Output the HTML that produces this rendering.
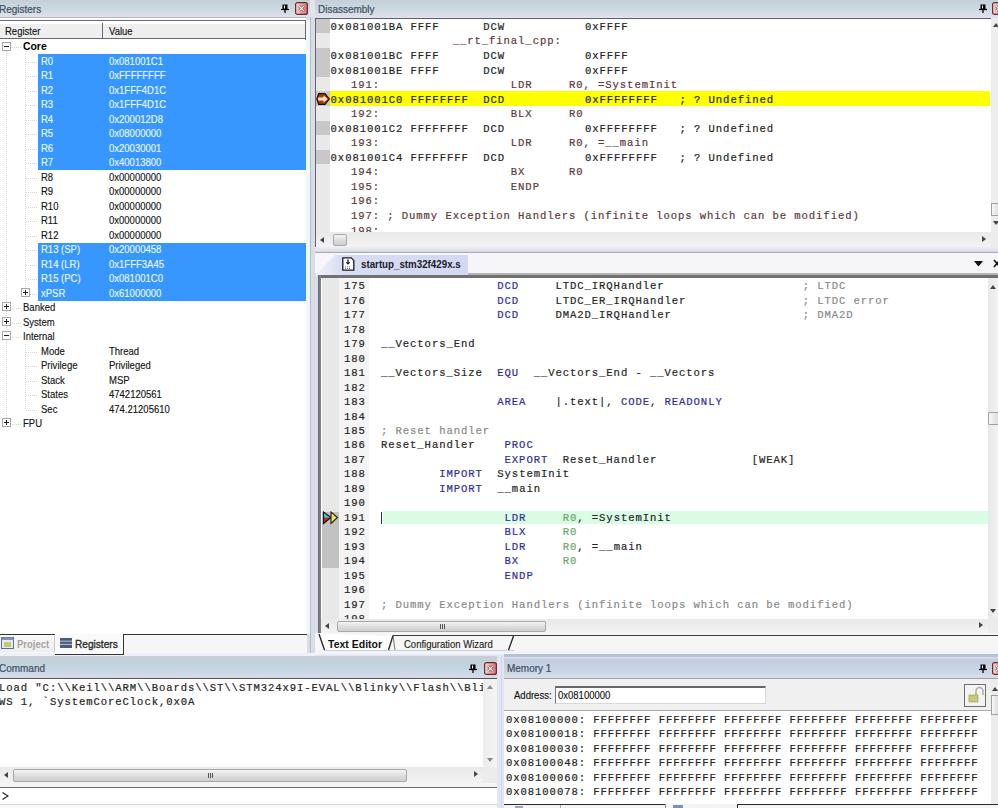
<!DOCTYPE html><html><head><meta charset="utf-8"><style>
*{margin:0;padding:0;box-sizing:border-box}
html,body{width:998px;height:808px;overflow:hidden;background:#e1e4ef;position:relative;font-family:"Liberation Sans",sans-serif}
.a{position:absolute}
.ui{font-family:"Liberation Sans",sans-serif;font-size:10.8px;white-space:pre;line-height:1;transform-origin:0 0}
.sx{transform:scaleX(0.85);font-size:11.2px;-webkit-text-stroke-width:0.15px}
.mono{font-family:"Liberation Mono",monospace;font-size:10.6px;letter-spacing:0.9117px;-webkit-text-stroke-width:0.2px;white-space:pre;line-height:14.545px}
.ttext{color:#3e4d62;font-size:10.5px;-webkit-text-stroke-width:0.2px}
.k{color:#30309a}.c{color:#8a8a8a}.g{color:#6aa86a}.d{color:#5e3a3c}.t{color:#262626}
</style></head><body>
<div class="a" style="left:0px;top:0px;width:310px;height:17px;background:linear-gradient(#c5cfd8 0%,#cdd9e0 55%,#dcdfea 92%,#dfe0ec 100%)"></div>
<div class="a ui ttext" style="left:-1px;top:4px;transform:scaleX(0.95)">Registers</div>
<svg class="a" style="left:281px;top:4px" width="8" height="9" viewBox="0 0 8 9"><path d="M1.5 0.5h5v5h-5z" fill="#000"/><path d="M3.5 1.5v3" stroke="#fff" stroke-width="1"/><path d="M0 5.5h8" stroke="#000" stroke-width="1.2"/><path d="M4 6v3" stroke="#000" stroke-width="1.3"/></svg>
<svg class="a" style="left:295px;top:2px" width="13" height="13" viewBox="0 0 13 13"><defs><linearGradient id="cg1" x1="0" y1="0" x2="1" y2="0"><stop offset="0" stop-color="#f0dcd6"/><stop offset="1" stop-color="#d46c74"/></linearGradient></defs><rect x="0.6" y="0.6" width="11.8" height="11.8" rx="2" fill="url(#cg1)" stroke="#6e2a2a" stroke-width="1.2"/><path d="M4.2 4.2l4.6 4.6M8.8 4.2l-4.6 4.6" stroke="#9a4040" stroke-width="2.6"/><path d="M4.2 4.2l4.6 4.6M8.8 4.2l-4.6 4.6" stroke="#fff" stroke-width="1.2"/></svg>
<div class="a" style="left:0px;top:17px;width:310px;height:1.2px;background:#b8b8c8"></div>
<div class="a" style="left:0px;top:18.2px;width:310px;height:1.8px;background:#fbfbfd"></div>
<div class="a" style="left:306px;top:17px;width:12px;height:640px;background:#d8dce8"></div>
<div class="a" style="left:306px;top:20px;width:4px;height:614px;background:#f0f7f7"></div>
<div class="a" style="left:310px;top:17px;width:1px;height:640px;background:#b8bcc4"></div>
<div class="a" style="left:311px;top:17px;width:4px;height:640px;background:#d9dde7"></div>
<div class="a" style="left:0px;top:20px;width:306px;height:614px;background:#fff;border-top:1.5px solid #6a6a78"></div>
<div class="a" style="left:0px;top:22.5px;width:306px;height:16.5px;background:#efefef;border-top:1px solid #fff;border-bottom:1px solid #6a6a6a"></div>
<div class="a" style="left:102px;top:22.5px;width:1px;height:16.5px;background:#6a6a6a"></div>
<div class="a" style="left:305px;top:20px;width:1.2px;height:19.5px;background:#6a6a6a"></div>
<div class="a ui sx" style="left:5px;top:26px;color:#111">Register</div>
<div class="a ui sx" style="left:109px;top:26px;color:#111">Value</div>
<div class="a" style="left:6px;top:51.245px;width:1px;height:372.74px;background:repeating-linear-gradient(#d4d4d4 0 1px,transparent 1px 2px)"></div>
<div class="a" style="left:25px;top:54.49px;width:1px;height:239.085px;background:repeating-linear-gradient(#d4d4d4 0 1px,transparent 1px 2px)"></div>
<div class="a" style="left:25px;top:344.29px;width:1px;height:65.205px;background:repeating-linear-gradient(#d4d4d4 0 1px,transparent 1px 2px)"></div>
<div class="a" style="left:38px;top:54.14px;width:268px;height:14.54px;background:#3797fe"></div>
<div class="a" style="left:38px;top:68.63px;width:268px;height:14.54px;background:#3797fe"></div>
<div class="a" style="left:38px;top:83.12px;width:268px;height:14.54px;background:#3797fe"></div>
<div class="a" style="left:38px;top:97.61px;width:268px;height:14.54px;background:#3797fe"></div>
<div class="a" style="left:38px;top:112.1px;width:268px;height:14.54px;background:#3797fe"></div>
<div class="a" style="left:38px;top:126.59px;width:268px;height:14.54px;background:#3797fe"></div>
<div class="a" style="left:38px;top:141.08px;width:268px;height:14.54px;background:#3797fe"></div>
<div class="a" style="left:38px;top:155.57px;width:268px;height:14.54px;background:#3797fe"></div>
<div class="a" style="left:38px;top:242.51px;width:268px;height:14.54px;background:#3797fe"></div>
<div class="a" style="left:38px;top:257.0px;width:268px;height:14.54px;background:#3797fe"></div>
<div class="a" style="left:38px;top:271.49px;width:268px;height:14.54px;background:#3797fe"></div>
<div class="a" style="left:38px;top:285.98px;width:268px;height:14.54px;background:#3797fe"></div>
<div class="a" style="left:12px;top:47.24px;width:9px;height:1px;background:repeating-linear-gradient(90deg,#d4d4d4 0 1px,transparent 1px 2px)"></div>
<svg class="a" style="left:2px;top:42px" width="9" height="9" viewBox="0 0 9 9"><rect x="0.5" y="0.5" width="8" height="8" fill="#fff" stroke="#a8a8a8"/><path d="M2 4.5h5" stroke="#222"/></svg>
<div class="a ui" style="left:22.5px;top:41.4px;color:#000;font-weight:bold;font-size:11.2px;transform:scaleX(0.93)">Core</div>
<div class="a" style="left:26px;top:61.73px;width:12px;height:1px;background:repeating-linear-gradient(90deg,#d4d4d4 0 1px,transparent 1px 2px)"></div>
<div class="a ui sx" style="left:41px;top:55.99px;color:#e8f8ff">R0</div>
<div class="a ui sx" style="left:109px;top:55.99px;color:#e8f8ff">0x081001C1</div>
<div class="a" style="left:26px;top:76.23px;width:12px;height:1px;background:repeating-linear-gradient(90deg,#d4d4d4 0 1px,transparent 1px 2px)"></div>
<div class="a ui sx" style="left:41px;top:70.48px;color:#e8f8ff">R1</div>
<div class="a ui sx" style="left:109px;top:70.48px;color:#e8f8ff">0xFFFFFFFF</div>
<div class="a" style="left:26px;top:90.72px;width:12px;height:1px;background:repeating-linear-gradient(90deg,#d4d4d4 0 1px,transparent 1px 2px)"></div>
<div class="a ui sx" style="left:41px;top:84.97px;color:#e8f8ff">R2</div>
<div class="a ui sx" style="left:109px;top:84.97px;color:#e8f8ff">0x1FFF4D1C</div>
<div class="a" style="left:26px;top:105.21px;width:12px;height:1px;background:repeating-linear-gradient(90deg,#d4d4d4 0 1px,transparent 1px 2px)"></div>
<div class="a ui sx" style="left:41px;top:99.46px;color:#e8f8ff">R3</div>
<div class="a ui sx" style="left:109px;top:99.46px;color:#e8f8ff">0x1FFF4D1C</div>
<div class="a" style="left:26px;top:119.7px;width:12px;height:1px;background:repeating-linear-gradient(90deg,#d4d4d4 0 1px,transparent 1px 2px)"></div>
<div class="a ui sx" style="left:41px;top:113.95px;color:#e8f8ff">R4</div>
<div class="a ui sx" style="left:109px;top:113.95px;color:#e8f8ff">0x200012D8</div>
<div class="a" style="left:26px;top:134.19px;width:12px;height:1px;background:repeating-linear-gradient(90deg,#d4d4d4 0 1px,transparent 1px 2px)"></div>
<div class="a ui sx" style="left:41px;top:128.44px;color:#e8f8ff">R5</div>
<div class="a ui sx" style="left:109px;top:128.44px;color:#e8f8ff">0x08000000</div>
<div class="a" style="left:26px;top:148.68px;width:12px;height:1px;background:repeating-linear-gradient(90deg,#d4d4d4 0 1px,transparent 1px 2px)"></div>
<div class="a ui sx" style="left:41px;top:142.93px;color:#e8f8ff">R6</div>
<div class="a ui sx" style="left:109px;top:142.93px;color:#e8f8ff">0x20030001</div>
<div class="a" style="left:26px;top:163.17px;width:12px;height:1px;background:repeating-linear-gradient(90deg,#d4d4d4 0 1px,transparent 1px 2px)"></div>
<div class="a ui sx" style="left:41px;top:157.42px;color:#e8f8ff">R7</div>
<div class="a ui sx" style="left:109px;top:157.42px;color:#e8f8ff">0x40013800</div>
<div class="a" style="left:26px;top:177.66px;width:12px;height:1px;background:repeating-linear-gradient(90deg,#d4d4d4 0 1px,transparent 1px 2px)"></div>
<div class="a ui sx" style="left:41px;top:171.91px;color:#141414">R8</div>
<div class="a ui sx" style="left:109px;top:171.91px;color:#141414">0x00000000</div>
<div class="a" style="left:26px;top:192.15px;width:12px;height:1px;background:repeating-linear-gradient(90deg,#d4d4d4 0 1px,transparent 1px 2px)"></div>
<div class="a ui sx" style="left:41px;top:186.4px;color:#141414">R9</div>
<div class="a ui sx" style="left:109px;top:186.4px;color:#141414">0x00000000</div>
<div class="a" style="left:26px;top:206.64px;width:12px;height:1px;background:repeating-linear-gradient(90deg,#d4d4d4 0 1px,transparent 1px 2px)"></div>
<div class="a ui sx" style="left:41px;top:200.89px;color:#141414">R10</div>
<div class="a ui sx" style="left:109px;top:200.89px;color:#141414">0x00000000</div>
<div class="a" style="left:26px;top:221.12px;width:12px;height:1px;background:repeating-linear-gradient(90deg,#d4d4d4 0 1px,transparent 1px 2px)"></div>
<div class="a ui sx" style="left:41px;top:215.38px;color:#141414">R11</div>
<div class="a ui sx" style="left:109px;top:215.38px;color:#141414">0x00000000</div>
<div class="a" style="left:26px;top:235.62px;width:12px;height:1px;background:repeating-linear-gradient(90deg,#d4d4d4 0 1px,transparent 1px 2px)"></div>
<div class="a ui sx" style="left:41px;top:229.87px;color:#141414">R12</div>
<div class="a ui sx" style="left:109px;top:229.87px;color:#141414">0x00000000</div>
<div class="a" style="left:26px;top:250.11px;width:12px;height:1px;background:repeating-linear-gradient(90deg,#d4d4d4 0 1px,transparent 1px 2px)"></div>
<div class="a ui sx" style="left:41px;top:244.36px;color:#e8f8ff">R13 (SP)</div>
<div class="a ui sx" style="left:109px;top:244.36px;color:#e8f8ff">0x20000458</div>
<div class="a" style="left:26px;top:264.6px;width:12px;height:1px;background:repeating-linear-gradient(90deg,#d4d4d4 0 1px,transparent 1px 2px)"></div>
<div class="a ui sx" style="left:41px;top:258.85px;color:#e8f8ff">R14 (LR)</div>
<div class="a ui sx" style="left:109px;top:258.85px;color:#e8f8ff">0x1FFF3A45</div>
<div class="a" style="left:26px;top:279.09px;width:12px;height:1px;background:repeating-linear-gradient(90deg,#d4d4d4 0 1px,transparent 1px 2px)"></div>
<div class="a ui sx" style="left:41px;top:273.34px;color:#e8f8ff">R15 (PC)</div>
<div class="a ui sx" style="left:109px;top:273.34px;color:#e8f8ff">0x081001C0</div>
<div class="a" style="left:30px;top:293.58px;width:8px;height:1px;background:repeating-linear-gradient(90deg,#d4d4d4 0 1px,transparent 1px 2px)"></div>
<svg class="a" style="left:21px;top:288px" width="9" height="9" viewBox="0 0 9 9"><rect x="0.5" y="0.5" width="8" height="8" fill="#fff" stroke="#a8a8a8"/><path d="M2 4.5h5" stroke="#222"/><path d="M4.5 2v5" stroke="#222"/></svg>
<div class="a ui sx" style="left:41px;top:287.83px;color:#e8f8ff">xPSR</div>
<div class="a ui sx" style="left:109px;top:287.83px;color:#e8f8ff">0x61000000</div>
<div class="a" style="left:12px;top:308.06px;width:9px;height:1px;background:repeating-linear-gradient(90deg,#d4d4d4 0 1px,transparent 1px 2px)"></div>
<svg class="a" style="left:2px;top:302px" width="9" height="9" viewBox="0 0 9 9"><rect x="0.5" y="0.5" width="8" height="8" fill="#fff" stroke="#a8a8a8"/><path d="M2 4.5h5" stroke="#222"/><path d="M4.5 2v5" stroke="#222"/></svg>
<div class="a ui sx" style="left:22.5px;top:302.32px;color:#141414">Banked</div>
<div class="a" style="left:12px;top:322.56px;width:9px;height:1px;background:repeating-linear-gradient(90deg,#d4d4d4 0 1px,transparent 1px 2px)"></div>
<svg class="a" style="left:2px;top:317px" width="9" height="9" viewBox="0 0 9 9"><rect x="0.5" y="0.5" width="8" height="8" fill="#fff" stroke="#a8a8a8"/><path d="M2 4.5h5" stroke="#222"/><path d="M4.5 2v5" stroke="#222"/></svg>
<div class="a ui sx" style="left:22.5px;top:316.81px;color:#141414">System</div>
<div class="a" style="left:12px;top:337.05px;width:9px;height:1px;background:repeating-linear-gradient(90deg,#d4d4d4 0 1px,transparent 1px 2px)"></div>
<svg class="a" style="left:2px;top:331px" width="9" height="9" viewBox="0 0 9 9"><rect x="0.5" y="0.5" width="8" height="8" fill="#fff" stroke="#a8a8a8"/><path d="M2 4.5h5" stroke="#222"/></svg>
<div class="a ui sx" style="left:22.5px;top:331.3px;color:#141414">Internal</div>
<div class="a" style="left:26px;top:351.54px;width:12px;height:1px;background:repeating-linear-gradient(90deg,#d4d4d4 0 1px,transparent 1px 2px)"></div>
<div class="a ui sx" style="left:41px;top:345.79px;color:#141414">Mode</div>
<div class="a ui sx" style="left:109px;top:345.79px;color:#141414">Thread</div>
<div class="a" style="left:26px;top:366.03px;width:12px;height:1px;background:repeating-linear-gradient(90deg,#d4d4d4 0 1px,transparent 1px 2px)"></div>
<div class="a ui sx" style="left:41px;top:360.28px;color:#141414">Privilege</div>
<div class="a ui sx" style="left:109px;top:360.28px;color:#141414">Privileged</div>
<div class="a" style="left:26px;top:380.51px;width:12px;height:1px;background:repeating-linear-gradient(90deg,#d4d4d4 0 1px,transparent 1px 2px)"></div>
<div class="a ui sx" style="left:41px;top:374.77px;color:#141414">Stack</div>
<div class="a ui sx" style="left:109px;top:374.77px;color:#141414">MSP</div>
<div class="a" style="left:26px;top:395.0px;width:12px;height:1px;background:repeating-linear-gradient(90deg,#d4d4d4 0 1px,transparent 1px 2px)"></div>
<div class="a ui sx" style="left:41px;top:389.26px;color:#141414">States</div>
<div class="a ui sx" style="left:109px;top:389.26px;color:#141414">4742120561</div>
<div class="a" style="left:26px;top:409.5px;width:12px;height:1px;background:repeating-linear-gradient(90deg,#d4d4d4 0 1px,transparent 1px 2px)"></div>
<div class="a ui sx" style="left:41px;top:403.75px;color:#141414">Sec</div>
<div class="a ui sx" style="left:109px;top:403.75px;color:#141414">474.21205610</div>
<div class="a" style="left:12px;top:423.99px;width:9px;height:1px;background:repeating-linear-gradient(90deg,#d4d4d4 0 1px,transparent 1px 2px)"></div>
<svg class="a" style="left:2px;top:418px" width="9" height="9" viewBox="0 0 9 9"><rect x="0.5" y="0.5" width="8" height="8" fill="#fff" stroke="#a8a8a8"/><path d="M2 4.5h5" stroke="#222"/><path d="M4.5 2v5" stroke="#222"/></svg>
<div class="a ui sx" style="left:22.5px;top:418.24px;color:#141414">FPU</div>
<div class="a" style="left:0px;top:634px;width:307px;height:19px;background:#f6f6f6"></div>
<div class="a" style="left:0px;top:653px;width:315px;height:3px;background:#eef1f8"></div>
<div class="a" style="left:0px;top:635px;width:54px;height:17px;background:linear-gradient(#f8f8f8,#eeeeee)"></div>
<svg class="a" style="left:1px;top:637px" width="13" height="12" viewBox="0 0 13 12"><rect x="0.5" y="0.5" width="12" height="11" fill="#e4eaf4" stroke="#5a6e9a"/><rect x="0.5" y="0.5" width="12" height="2.5" fill="#7f93bd"/><rect x="3" y="5" width="7" height="5" fill="#c8c86a"/></svg>
<div class="a ui" style="left:16.5px;top:639px;color:#a4a4a4;font-weight:bold;font-size:10.5px;transform:scaleX(0.9)">Project</div>
<div class="a" style="left:0px;top:633.5px;width:55px;height:1.2px;background:#333"></div>
<div class="a" style="left:122.5px;top:633.5px;width:184px;height:1.2px;background:#333"></div>
<div class="a" style="left:55px;top:634px;width:68.5px;height:20.5px;background:#fafafa;border-right:1.2px solid #333;border-bottom:1.2px solid #333"></div>
<div class="a" style="left:54px;top:636px;width:1px;height:16px;background:#c8c8c8"></div>
<svg class="a" style="left:60px;top:638px" width="12" height="10" viewBox="0 0 12 10"><rect x="0" y="0" width="12" height="10" fill="#4a5a7a"/><path d="M0 3.2h12M0 6.4h12" stroke="#c8d0e0" stroke-width="0.9"/></svg>
<div class="a ui" style="left:74.5px;top:639px;color:#2a2a2a;font-size:11px;-webkit-text-stroke-width:0.35px;transform:scaleX(0.92)">Registers</div>
<div class="a" style="left:315px;top:0px;width:683px;height:17px;background:linear-gradient(#c5cfd8 0%,#cdd9e0 55%,#dcdfea 92%,#dfe0ec 100%)"></div>
<div class="a ui ttext" style="left:318px;top:4px;transform:scaleX(0.95)">Disassembly</div>
<svg class="a" style="left:979px;top:4px" width="8" height="9" viewBox="0 0 8 9"><path d="M1.5 0.5h5v5h-5z" fill="#000"/><path d="M3.5 1.5v3" stroke="#fff" stroke-width="1"/><path d="M0 5.5h8" stroke="#000" stroke-width="1.2"/><path d="M4 6v3" stroke="#000" stroke-width="1.3"/></svg>
<svg class="a" style="left:992px;top:2px" width="13" height="13" viewBox="0 0 13 13"><defs><linearGradient id="cg2" x1="0" y1="0" x2="1" y2="0"><stop offset="0" stop-color="#f0dcd6"/><stop offset="1" stop-color="#d46c74"/></linearGradient></defs><rect x="0.6" y="0.6" width="11.8" height="11.8" rx="2" fill="url(#cg2)" stroke="#6e2a2a" stroke-width="1.2"/><path d="M4.2 4.2l4.6 4.6M8.8 4.2l-4.6 4.6" stroke="#9a4040" stroke-width="2.6"/><path d="M4.2 4.2l4.6 4.6M8.8 4.2l-4.6 4.6" stroke="#fff" stroke-width="1.2"/></svg>
<div class="a" style="left:315px;top:17.9px;width:683px;height:1.1px;background:#5e5e6e"></div>
<div class="a" style="left:315px;top:19px;width:683px;height:228px;background:#fff;border-left:1.5px solid #606868"></div>
<div class="a" style="left:316px;top:18.7px;width:14px;height:14.54px;background:#c8c8c8"></div>
<div class="a" style="left:316px;top:33.24px;width:14px;height:14.54px;background:#e9e9e9"></div>
<div class="a" style="left:316px;top:47.79px;width:14px;height:14.54px;background:#c8c8c8"></div>
<div class="a" style="left:316px;top:62.33px;width:14px;height:14.54px;background:#c8c8c8"></div>
<div class="a" style="left:316px;top:76.88px;width:14px;height:14.54px;background:#e9e9e9"></div>
<div class="a" style="left:316px;top:91.42px;width:14px;height:14.54px;background:#c8c8c8"></div>
<div class="a" style="left:329.5px;top:90.92px;width:660px;height:15.3px;background:#ffff00"></div>
<div class="a" style="left:316px;top:105.97px;width:14px;height:14.54px;background:#e9e9e9"></div>
<div class="a" style="left:316px;top:120.52px;width:14px;height:14.54px;background:#c8c8c8"></div>
<div class="a" style="left:316px;top:135.06px;width:14px;height:14.54px;background:#e9e9e9"></div>
<div class="a" style="left:316px;top:149.6px;width:14px;height:14.54px;background:#c8c8c8"></div>
<div class="a" style="left:316px;top:164.15px;width:14px;height:14.54px;background:#e9e9e9"></div>
<div class="a" style="left:316px;top:178.69px;width:14px;height:14.54px;background:#e9e9e9"></div>
<div class="a" style="left:316px;top:193.24px;width:14px;height:14.54px;background:#e9e9e9"></div>
<div class="a" style="left:316px;top:207.78px;width:14px;height:14.54px;background:#e9e9e9"></div>
<div class="a" style="left:316px;top:222.33px;width:14px;height:9.67px;background:#e9e9e9"></div>
<div class="a" style="left:316px;top:19.9px;width:675px;height:212px;overflow:hidden">
<div class="a mono t" style="left:14.6px;top:0.0px">0x081001BA FFFF      DCW           0xFFFF</div>
<div class="a mono d" style="left:13.1px;top:14.54px">                 __rt_final_cpp:</div>
<div class="a mono t" style="left:14.6px;top:29.09px">0x081001BC FFFF      DCW           0xFFFF</div>
<div class="a mono t" style="left:14.6px;top:43.63px">0x081001BE FFFF      DCW           0xFFFF</div>
<div class="a mono d" style="left:13.1px;top:58.18px">   191:                  LDR     R0, =SystemInit</div>
<div class="a mono t" style="left:14.6px;top:72.72px">0x081001C0 FFFFFFFF  DCD           0xFFFFFFFF   ; ? Undefined</div>
<div class="a mono d" style="left:13.1px;top:87.27px">   192:                  BLX     R0</div>
<div class="a mono t" style="left:14.6px;top:101.81px">0x081001C2 FFFFFFFF  DCD           0xFFFFFFFF   ; ? Undefined</div>
<div class="a mono d" style="left:13.1px;top:116.36px">   193:                  LDR     R0, =__main</div>
<div class="a mono t" style="left:14.6px;top:130.91px">0x081001C4 FFFFFFFF  DCD           0xFFFFFFFF   ; ? Undefined</div>
<div class="a mono d" style="left:13.1px;top:145.45px">   194:                  BX      R0</div>
<div class="a mono d" style="left:13.1px;top:160.0px">   195:                  ENDP</div>
<div class="a mono d" style="left:13.1px;top:174.54px">   196:</div>
<div class="a mono d" style="left:13.1px;top:189.09px">   197: ; Dummy Exception Handlers (infinite loops which can be modified)</div>
<div class="a mono d" style="left:13.1px;top:203.63px">   198:</div>
</div>
<svg class="a" style="left:316px;top:92px" width="14" height="14" viewBox="0 0 14 14"><path d="M2.6 1.6H9L13.3 7L9 12.4H2.6L0.8 7z" fill="#a8381c" stroke="#1a0806" stroke-width="1.1"/><path d="M2.2 5.6H7.6V3.6L11.6 7L7.6 10.4V8.4H2.2z" fill="#fff2a8"/></svg>
<div class="a" style="left:991px;top:18px;width:7px;height:214px;background:#ededed"></div>
<svg class="a" style="left:993px;top:23px" width="5" height="4"><path d="M0 4h6L3 0z" fill="#444"/></svg>
<div class="a" style="left:991px;top:203px;width:7px;height:13px;background:linear-gradient(90deg,#f6f6f6,#dedede);border:1px solid #a0a0a0;border-right:none"></div>
<svg class="a" style="left:993px;top:221px" width="5" height="4"><path d="M0 0h6L3 4z" fill="#444"/></svg>
<div class="a" style="left:316px;top:232px;width:675px;height:15px;background:linear-gradient(#e9e9e9,#f3f3f3)"></div>
<svg class="a" style="left:320px;top:236.5px" width="5" height="6"><path d="M4 0v6L0 3z" fill="#444"/></svg>
<svg class="a" style="left:982px;top:235.5px" width="5" height="6"><path d="M0 0v6L4 3z" fill="#444"/></svg>
<div class="a" style="left:333px;top:233.5px;width:14px;height:12px;background:linear-gradient(#f4f4f4,#dcdcdc 55%,#cfcfcf);border:1px solid #a9a9a9;border-radius:2px"></div>
<div class="a" style="left:991px;top:232px;width:7px;height:15px;background:#ececec"></div>
<div class="a" style="left:315px;top:247px;width:683px;height:5.3px;background:linear-gradient(#ececf2,#e4e4ee 55%,#d6d6e2)"></div>
<div class="a" style="left:315px;top:252px;width:683px;height:0.8px;background:#a8a8b8"></div>
<div class="a" style="left:315px;top:252.8px;width:683px;height:20.5px;background:#f6f6f8"></div>
<div class="a" style="left:318px;top:273px;width:680px;height:2px;background:#b4b4b4"></div>
<svg class="a" style="left:315px;top:254.5px" width="160" height="21" viewBox="0 0 160 21"><defs><linearGradient id="tg" x1="0" y1="0" x2="1" y2="0"><stop offset="0" stop-color="#f4f4fa"/><stop offset="0.18" stop-color="#d6dcf2"/><stop offset="1" stop-color="#d2d9f0"/></linearGradient></defs><path d="M0 20.5L20 0H153V20.5z" fill="url(#tg)"/></svg>
<svg class="a" style="left:342px;top:256.5px" width="13" height="14" viewBox="0 0 13 14"><path d="M0.8 0.8h8.4l2.6 2.6v9.8h-11z" fill="#fff" stroke="#1a1a1a" stroke-width="1.3"/><path d="M6 2.5v3" stroke="#111" stroke-width="1.3"/><path d="M3.6 5.2h4.8L6 7.8z" fill="#111"/><path d="M3 9.8h6M3 11.6h6" stroke="#555" stroke-width="0.9" stroke-dasharray="1 1"/></svg>
<div class="a ui" style="left:360.5px;top:258.5px;color:#1a1a2a;font-weight:bold;font-size:11px;transform:scaleX(0.886)">startup_stm32f429x.s</div>
<svg class="a" style="left:974px;top:260.5px" width="9" height="5.5"><path d="M0 0h9L4.5 5.5z" fill="#111"/></svg>
<svg class="a" style="left:993px;top:259px" width="8" height="9"><path d="M1 1l6 7M7 1l-6 7" stroke="#111" stroke-width="1.6"/></svg>
<div class="a" style="left:318px;top:275px;width:680px;height:2.5px;background:#707070"></div>
<div class="a" style="left:318px;top:275px;width:2.5px;height:358px;background:linear-gradient(90deg,#6a6a78,#808890)"></div>
<div class="a" style="left:320.5px;top:277.5px;width:668px;height:341.5px;background:#fff"></div>
<div class="a" style="left:320.5px;top:277.5px;width:1.5px;height:341.5px;background:#fff"></div>
<div class="a" style="left:322px;top:277.5px;width:17px;height:341.5px;background:#e8e8e8"></div>
<div class="a" style="left:322px;top:511.5px;width:17px;height:56.8px;background:#c2c2c2"></div>
<div class="a" style="left:339px;top:277.5px;width:30px;height:341.5px;background:#f4f4f4"></div>
<div class="a" style="left:383px;top:511.3px;width:605px;height:12.6px;background:#dafce4"></div>
<div class="a" style="left:381px;top:512.3px;width:1.2px;height:12px;background:#333"></div>
<div class="a" style="left:320.5px;top:279.2px;width:668px;height:339.4px;overflow:hidden">
<div class="a mono t" style="left:23.5px;top:0.0px">175</div>
<div class="a mono t" style="left:60.5px;top:0.0px">                <span class="k">DCD</span><span class="t">     LTDC_IRQHandler                   </span><span class="c">; LTDC</span></div>
<div class="a mono t" style="left:23.5px;top:14.48px">176</div>
<div class="a mono t" style="left:60.5px;top:14.48px">                <span class="k">DCD</span><span class="t">     LTDC_ER_IRQHandler                </span><span class="c">; LTDC error</span></div>
<div class="a mono t" style="left:23.5px;top:28.96px">177</div>
<div class="a mono t" style="left:60.5px;top:28.96px">                <span class="k">DCD</span><span class="t">     DMA2D_IRQHandler                  </span><span class="c">; DMA2D</span></div>
<div class="a mono t" style="left:23.5px;top:43.44px">178</div>
<div class="a mono t" style="left:23.5px;top:57.92px">179</div>
<div class="a mono t" style="left:60.5px;top:57.92px"><span class="t">__Vectors_End</span></div>
<div class="a mono t" style="left:23.5px;top:72.4px">180</div>
<div class="a mono t" style="left:23.5px;top:86.88px">181</div>
<div class="a mono t" style="left:60.5px;top:86.88px"><span class="t">__Vectors_Size  </span><span class="k">EQU</span><span class="t">  __Vectors_End - __Vectors</span></div>
<div class="a mono t" style="left:23.5px;top:101.36px">182</div>
<div class="a mono t" style="left:23.5px;top:115.84px">183</div>
<div class="a mono t" style="left:60.5px;top:115.84px">                <span class="k">AREA</span><span class="t">    |.text|, </span><span class="k">CODE</span><span class="t">, </span><span class="k">READONLY</span></div>
<div class="a mono t" style="left:23.5px;top:130.32px">184</div>
<div class="a mono t" style="left:23.5px;top:144.8px">185</div>
<div class="a mono t" style="left:60.5px;top:144.8px"><span class="c">; Reset handler</span></div>
<div class="a mono t" style="left:23.5px;top:159.28px">186</div>
<div class="a mono t" style="left:60.5px;top:159.28px"><span class="t">Reset_Handler    </span><span class="k">PROC</span></div>
<div class="a mono t" style="left:23.5px;top:173.76px">187</div>
<div class="a mono t" style="left:60.5px;top:173.76px">                 <span class="k">EXPORT</span><span class="t">  Reset_Handler             [WEAK]</span></div>
<div class="a mono t" style="left:23.5px;top:188.24px">188</div>
<div class="a mono t" style="left:60.5px;top:188.24px">        <span class="k">IMPORT</span><span class="t">  SystemInit</span></div>
<div class="a mono t" style="left:23.5px;top:202.72px">189</div>
<div class="a mono t" style="left:60.5px;top:202.72px">        <span class="k">IMPORT</span><span class="t">  __main</span></div>
<div class="a mono t" style="left:23.5px;top:217.2px">190</div>
<div class="a mono t" style="left:23.5px;top:231.68px">191</div>
<div class="a mono t" style="left:60.5px;top:231.68px">                 <span class="k">LDR</span><span class="t">     </span><span class="g">R0</span><span class="t">, =SystemInit</span></div>
<div class="a mono t" style="left:23.5px;top:246.16px">192</div>
<div class="a mono t" style="left:60.5px;top:246.16px">                 <span class="k">BLX</span><span class="t">     </span><span class="g">R0</span></div>
<div class="a mono t" style="left:23.5px;top:260.64px">193</div>
<div class="a mono t" style="left:60.5px;top:260.64px">                 <span class="k">LDR</span><span class="t">     </span><span class="g">R0</span><span class="t">, =__main</span></div>
<div class="a mono t" style="left:23.5px;top:275.12px">194</div>
<div class="a mono t" style="left:60.5px;top:275.12px">                 <span class="k">BX</span><span class="t">      </span><span class="g">R0</span></div>
<div class="a mono t" style="left:23.5px;top:289.6px">195</div>
<div class="a mono t" style="left:60.5px;top:289.6px">                 <span class="k">ENDP</span></div>
<div class="a mono t" style="left:23.5px;top:304.08px">196</div>
<div class="a mono t" style="left:23.5px;top:318.56px">197</div>
<div class="a mono t" style="left:60.5px;top:318.56px"><span class="c">; Dummy Exception Handlers (infinite loops which can be modified)</span></div>
<div class="a mono t" style="left:23.5px;top:333.04px">198</div>
</div>
<svg class="a" style="left:322px;top:510.6px" width="17" height="14" viewBox="0 0 17 14"><path d="M1.5 1L9 6.5H1.5z" fill="#3cc8d8"/><path d="M1.5 6.5H9L1.5 12.5z" fill="#c42a22"/><path d="M1.5 1v11.5L9 6.5z" fill="none" stroke="#141414" stroke-width="1.1"/><path d="M9 1v11.5L15.5 6.5z" fill="#f4e45a" stroke="#1e1e1e" stroke-width="1.1"/></svg>
<div class="a" style="left:988px;top:277.5px;width:10px;height:341.5px;background:linear-gradient(90deg,#e8e8e8,#f2f2f2)"></div>
<svg class="a" style="left:990px;top:285px" width="6" height="4"><path d="M0 4h6L3 0z" fill="#444"/></svg>
<div class="a" style="left:988px;top:412px;width:10px;height:13px;background:linear-gradient(90deg,#f8f8f8,#dcdcdc);border:1px solid #a0a0a0;border-right:none;border-radius:2px 0 0 2px"></div>
<svg class="a" style="left:990px;top:609px" width="6" height="4"><path d="M0 0h6L3 4z" fill="#444"/></svg>
<div class="a" style="left:320.5px;top:619px;width:667.5px;height:14px;background:linear-gradient(#e9e9e9,#f3f3f3)"></div>
<svg class="a" style="left:324.5px;top:623.0px" width="5" height="6"><path d="M4 0v6L0 3z" fill="#444"/></svg>
<svg class="a" style="left:979.0px;top:622.0px" width="5" height="6"><path d="M0 0v6L4 3z" fill="#444"/></svg>
<div class="a" style="left:337px;top:620.5px;width:209px;height:11px;background:linear-gradient(#f4f4f4,#dcdcdc 55%,#cfcfcf);border:1px solid #a9a9a9;border-radius:2px"></div>
<div class="a" style="left:439.5px;top:623.5px;width:1px;height:5px;background:#555"></div>
<div class="a" style="left:441.5px;top:623.5px;width:1px;height:5px;background:#555"></div>
<div class="a" style="left:443.5px;top:623.5px;width:1px;height:5px;background:#555"></div>
<div class="a" style="left:988px;top:619px;width:10px;height:14px;background:#ececec"></div>
<div class="a" style="left:315px;top:633px;width:683px;height:18px;background:#f6f6f6"></div>
<div class="a" style="left:393px;top:635.3px;width:605px;height:1.2px;background:#3a3a3a"></div>
<div class="a" style="left:324px;top:650px;width:190px;height:1px;background:#cfcfcf"></div>
<svg class="a" style="left:315px;top:633px" width="205" height="19" viewBox="0 0 205 19"><path d="M4 1L9.5 17H73.5L78 3z" fill="#fff"/><path d="M4 1L9.5 17M73.5 17L78 2.5" stroke="#222" stroke-width="1.3" fill="none"/><path d="M78 3L80 17" stroke="#555" stroke-width="0.8"/><path d="M193.5 17L198.5 3" stroke="#222" stroke-width="1.3"/></svg>
<div class="a ui" style="left:328px;top:638.5px;color:#111;font-weight:bold;font-size:10.5px">Text Editor</div>
<div class="a ui sx" style="left:404px;top:638.5px;color:#222">Configuration Wizard</div>
<div class="a" style="left:315px;top:651px;width:683px;height:5px;background:linear-gradient(#eef0f0,#f4f8ff 40%,#dfe2ef)"></div>
<div class="a" style="left:0px;top:656px;width:497px;height:21.5px;background:linear-gradient(#cacdda 0%,#c0d3d8 30%,#c8d5e4 62%,#d6dce7 100%)"></div>
<div class="a ui ttext" style="left:-1px;top:662.5px;transform:scaleX(0.95)">Command</div>
<svg class="a" style="left:469px;top:664px" width="8" height="9" viewBox="0 0 8 9"><path d="M1.5 0.5h5v5h-5z" fill="#000"/><path d="M3.5 1.5v3" stroke="#fff" stroke-width="1"/><path d="M0 5.5h8" stroke="#000" stroke-width="1.2"/><path d="M4 6v3" stroke="#000" stroke-width="1.3"/></svg>
<svg class="a" style="left:484px;top:662px" width="13" height="13" viewBox="0 0 13 13"><defs><linearGradient id="cg3" x1="0" y1="0" x2="1" y2="0"><stop offset="0" stop-color="#f0dcd6"/><stop offset="1" stop-color="#d46c74"/></linearGradient></defs><rect x="0.6" y="0.6" width="11.8" height="11.8" rx="2" fill="url(#cg3)" stroke="#6e2a2a" stroke-width="1.2"/><path d="M4.2 4.2l4.6 4.6M8.8 4.2l-4.6 4.6" stroke="#9a4040" stroke-width="2.6"/><path d="M4.2 4.2l4.6 4.6M8.8 4.2l-4.6 4.6" stroke="#fff" stroke-width="1.2"/></svg>
<div class="a" style="left:0px;top:677.5px;width:497px;height:1.1px;background:#505060"></div>
<div class="a" style="left:0px;top:678.5px;width:483px;height:88.5px;background:#fff"></div>
<div class="a mono t" style="left:-1px;top:680.8px">Load "C:\\Keil\\ARM\\Boards\\ST\\STM324x9I-EVAL\\Blinky\\Flash\\Bli
WS 1, `SystemCoreClock,0x0A</div>
<div class="a" style="left:483px;top:678.5px;width:14px;height:88.5px;background:linear-gradient(90deg,#ececec,#f4f4f4)"></div>
<svg class="a" style="left:487px;top:685px" width="6" height="4"><path d="M0 4h6L3 0z" fill="#888"/></svg>
<svg class="a" style="left:487px;top:758px" width="6" height="4"><path d="M0 0h6L3 4z" fill="#888"/></svg>
<div class="a" style="left:0px;top:767px;width:483px;height:16px;background:linear-gradient(#e9e9e9,#f3f3f3)"></div>
<svg class="a" style="left:4px;top:772.0px" width="5" height="6"><path d="M4 0v6L0 3z" fill="#444"/></svg>
<svg class="a" style="left:474px;top:771.0px" width="5" height="6"><path d="M0 0v6L4 3z" fill="#444"/></svg>
<div class="a" style="left:13px;top:768.5px;width:394px;height:13px;background:linear-gradient(#f4f4f4,#dcdcdc 55%,#cfcfcf);border:1px solid #a9a9a9;border-radius:2px"></div>
<div class="a" style="left:208.0px;top:772.5px;width:1px;height:5px;background:#555"></div>
<div class="a" style="left:210.0px;top:772.5px;width:1px;height:5px;background:#555"></div>
<div class="a" style="left:212.0px;top:772.5px;width:1px;height:5px;background:#555"></div>
<div class="a" style="left:483px;top:767px;width:14px;height:16px;background:#ececec"></div>
<div class="a" style="left:0px;top:783px;width:497px;height:4px;background:#f4f4f4"></div>
<div class="a" style="left:0px;top:787px;width:497px;height:1.2px;background:#6a6a6a"></div>
<div class="a" style="left:0px;top:788.2px;width:497px;height:16px;background:#fff"></div>
<svg class="a" style="left:2px;top:792px" width="7" height="8"><path d="M0.5 0.5L6 4L0.5 7.5" stroke="#222" stroke-width="1.2" fill="none"/></svg>
<div class="a" style="left:0px;top:803.5px;width:497px;height:1px;background:#d8d8d8"></div>
<div class="a" style="left:0px;top:804.5px;width:497px;height:3.5px;background:#fafafa"></div>
<div class="a" style="left:497px;top:656px;width:6.5px;height:152px;background:#e4e5f3"></div>
<div class="a" style="left:500.5px;top:656px;width:1.5px;height:152px;background:#d3d5ea"></div>
<div class="a" style="left:503.5px;top:653.5px;width:494.5px;height:24px;background:linear-gradient(#b8c0d4 0px,#b8c0d4 2.5px,#d8e0f0 3px,#c4cde0 6px,#cad8e8 19px,#d8dce6 21px,#d8dce6 24px)"></div>
<div class="a ui ttext" style="left:507px;top:663.0px;transform:scaleX(0.95)">Memory 1</div>
<svg class="a" style="left:979px;top:664px" width="8" height="9" viewBox="0 0 8 9"><path d="M1.5 0.5h5v5h-5z" fill="#000"/><path d="M3.5 1.5v3" stroke="#fff" stroke-width="1"/><path d="M0 5.5h8" stroke="#000" stroke-width="1.2"/><path d="M4 6v3" stroke="#000" stroke-width="1.3"/></svg>
<svg class="a" style="left:992px;top:662px" width="13" height="13" viewBox="0 0 13 13"><defs><linearGradient id="cg4" x1="0" y1="0" x2="1" y2="0"><stop offset="0" stop-color="#f0dcd6"/><stop offset="1" stop-color="#d46c74"/></linearGradient></defs><rect x="0.6" y="0.6" width="11.8" height="11.8" rx="2" fill="url(#cg4)" stroke="#6e2a2a" stroke-width="1.2"/><path d="M4.2 4.2l4.6 4.6M8.8 4.2l-4.6 4.6" stroke="#9a4040" stroke-width="2.6"/><path d="M4.2 4.2l4.6 4.6M8.8 4.2l-4.6 4.6" stroke="#fff" stroke-width="1.2"/></svg>
<div class="a" style="left:503.5px;top:677.5px;width:494.5px;height:1.2px;background:#a0a0aa"></div>
<div class="a" style="left:503.5px;top:678.5px;width:495px;height:32px;background:#f0f0f0"></div>
<div class="a ui sx" style="left:514px;top:689.5px;color:#111">Address:</div>
<div class="a" style="left:555px;top:686px;width:211px;height:18px;background:#fff;border:1px solid #d8d8d8;border-top:2px solid #666;border-left:1.5px solid #777"></div>
<div class="a ui sx" style="left:558px;top:689.5px;color:#111">0x08100000</div>
<div class="a" style="left:964px;top:683.5px;width:22px;height:23px;background:#f3f3f3;border:1px solid #6e6e6e"></div>
<svg class="a" style="left:967px;top:686px" width="17" height="18" viewBox="0 0 17 18"><path d="M9 9V5a3.5 3.5 0 0 1 7 0v4" stroke="#b0b0a8" stroke-width="1.6" fill="none"/><rect x="2" y="9" width="9" height="7" fill="#c9c97a" stroke="#9a9a50" stroke-width="0.6"/></svg>
<div class="a" style="left:503.5px;top:710px;width:488px;height:93.5px;background:#fff;border-top:1px solid #a8a8a8"></div>
<div class="a mono t" style="left:506px;top:713px;line-height:14.45px">0x08100000: FFFFFFFF FFFFFFFF FFFFFFFF FFFFFFFF FFFFFFFF FFFFFFFF
0x08100018: FFFFFFFF FFFFFFFF FFFFFFFF FFFFFFFF FFFFFFFF FFFFFFFF
0x08100030: FFFFFFFF FFFFFFFF FFFFFFFF FFFFFFFF FFFFFFFF FFFFFFFF
0x08100048: FFFFFFFF FFFFFFFF FFFFFFFF FFFFFFFF FFFFFFFF FFFFFFFF
0x08100060: FFFFFFFF FFFFFFFF FFFFFFFF FFFFFFFF FFFFFFFF FFFFFFFF
0x08100078: FFFFFFFF FFFFFFFF FFFFFFFF FFFFFFFF FFFFFFFF FFFFFFFF</div>
<div class="a" style="left:991px;top:678.5px;width:7px;height:125px;background:#ececec"></div>
<svg class="a" style="left:992px;top:687px" width="6" height="4"><path d="M0 4h6L3 0z" fill="#444"/></svg>
<div class="a" style="left:991px;top:695px;width:7px;height:20px;background:linear-gradient(90deg,#f8f8f8,#dcdcdc);border:1px solid #a0a0a0;border-right:none"></div>
<div class="a" style="left:503.5px;top:803.5px;width:494.5px;height:4.5px;background:#f4f4f4"></div>
<div class="a" style="left:503.5px;top:803.5px;width:162.5px;height:1.2px;background:#2a2a2a"></div>
<div class="a" style="left:737px;top:803.5px;width:261px;height:1.2px;background:#2a2a2a"></div>
<div class="a" style="left:737px;top:803.5px;width:1.2px;height:5px;background:#2a2a2a"></div>
<div class="a" style="left:665px;top:803.5px;width:1px;height:5px;background:#888"></div>
<div class="a" style="left:673px;top:805px;width:10px;height:3px;background:#7d8fb8"></div>
<div class="a" style="left:515px;top:805.5px;width:8px;height:2.5px;background:#9aa8c4"></div>
<div class="a" style="left:560px;top:805px;width:1px;height:3px;background:#aaa"></div>
</body></html>
